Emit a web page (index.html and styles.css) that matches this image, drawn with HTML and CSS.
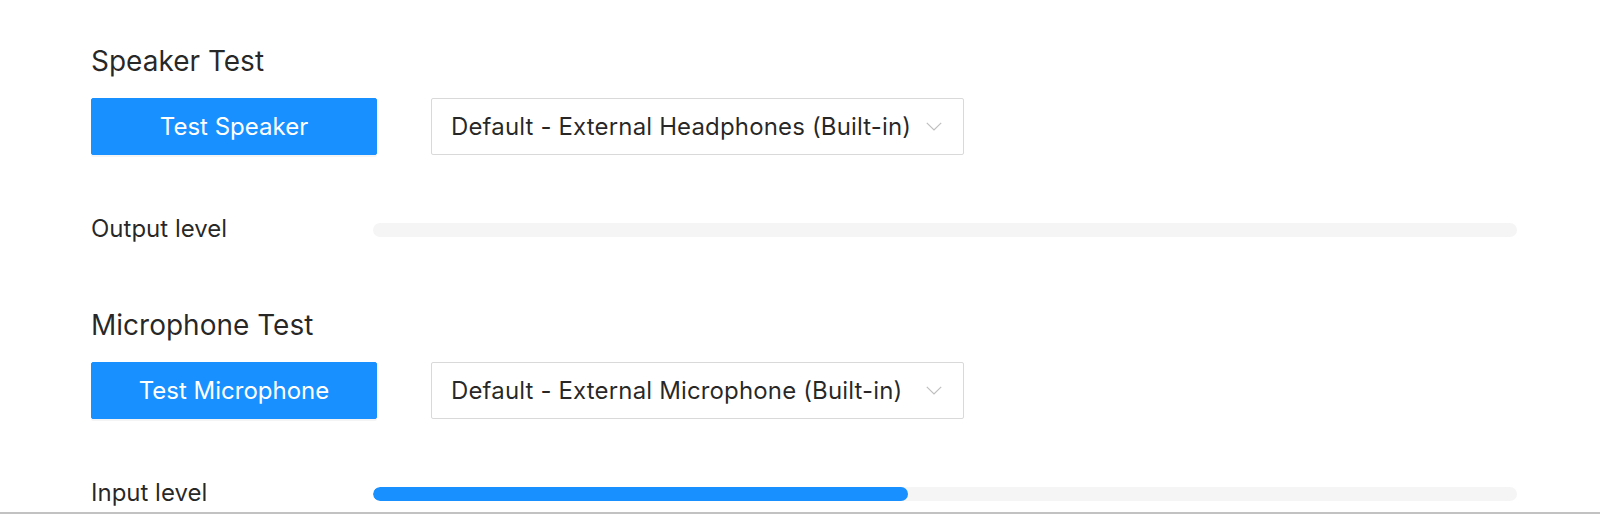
FILE: index.html
```html
<!DOCTYPE html>
<html lang="en">
<head>
<meta charset="utf-8">
<title>Audio Test</title>
<link rel="stylesheet" href="styles.css">
</head>
<body>
<div class="frame">
  <div class="page">
    <section class="section">
      <h2 class="title">Speaker Test</h2>
      <div class="controls">
        <button class="btn" type="button">Test Speaker</button>
        <div class="select">
          <span class="select-value">Default - External Headphones (Built-in)</span>
          <svg class="chevron" width="16" height="9" viewBox="0 0 16 9"><polyline points="0.8,0.8 8,8 15.2,0.8" fill="none" stroke="#bfbfbf" stroke-width="1.2"/></svg>
        </div>
      </div>
      <div class="level">
        <span class="level-label">Output level</span>
        <div class="track"><div class="fill" style="width:0%"></div></div>
      </div>
    </section>
    <section class="section">
      <h2 class="title">Microphone Test</h2>
      <div class="controls">
        <button class="btn" type="button">Test Microphone</button>
        <div class="select">
          <span class="select-value">Default - External Microphone (Built-in)</span>
          <svg class="chevron" width="16" height="9" viewBox="0 0 16 9"><polyline points="0.8,0.8 8,8 15.2,0.8" fill="none" stroke="#bfbfbf" stroke-width="1.2"/></svg>
        </div>
      </div>
      <div class="level">
        <span class="level-label">Input level</span>
        <div class="track"><div class="fill" style="width:46.8%"></div></div>
      </div>
    </section>
  </div>
</div>
</body>
</html>
```
FILE: styles.css
```css
* { box-sizing: border-box; }
html, body { margin: 0; padding: 0; background: #fff; }
body {
  font-family: Inter, "Noto Sans", "Liberation Sans", sans-serif;
  color: rgba(0, 0, 0, 0.85);
}
.frame {
  width: 1600px;
  height: 514px;
  overflow: hidden;
  position: relative;
  border-bottom: 2px solid #c2c2c2;
}
.page {
  padding: 44px 83px 0 91px;
}
.section {
  display: flex;
  flex-direction: column;
  margin-bottom: 58px;
}
.title {
  margin: 0 0 20px 0;
  font-size: 28px;
  line-height: 34px;
  font-weight: 400;
  color: rgba(0, 0, 0, 0.85);
}
.controls {
  display: flex;
  align-items: center;
  gap: 54px;
}
.btn {
  width: 286px;
  height: 57px;
  border: 1px solid #1890ff;
  background: #1890ff;
  color: #fff;
  border-radius: 2px;
  font-family: inherit;
  font-size: 24px;
  font-weight: 400;
  box-shadow: 0 2px 0 rgba(0, 0, 0, 0.045);
  padding: 0;
}
.select {
  width: 533px;
  height: 57px;
  border: 1px solid #d9d9d9;
  border-radius: 2px;
  display: flex;
  align-items: center;
  justify-content: space-between;
  padding: 0 21px 0 19px;
  font-size: 24px;
}
.select-value {
  white-space: nowrap;
  letter-spacing: 0.15px;
}
.chevron { flex: none; }
.level {
  display: flex;
  align-items: center;
  height: 40px;
  margin-top: 55px;
}
.level-label {
  width: 282px;
  flex: none;
  font-size: 24px;
  padding-bottom: 4px;
}
.track {
  flex: 1;
  height: 14px;
  border-radius: 7px;
  background: #f5f5f5;
  overflow: hidden;
}
.fill {
  height: 100%;
  background: #1890ff;
  border-radius: 7px;
}
```
